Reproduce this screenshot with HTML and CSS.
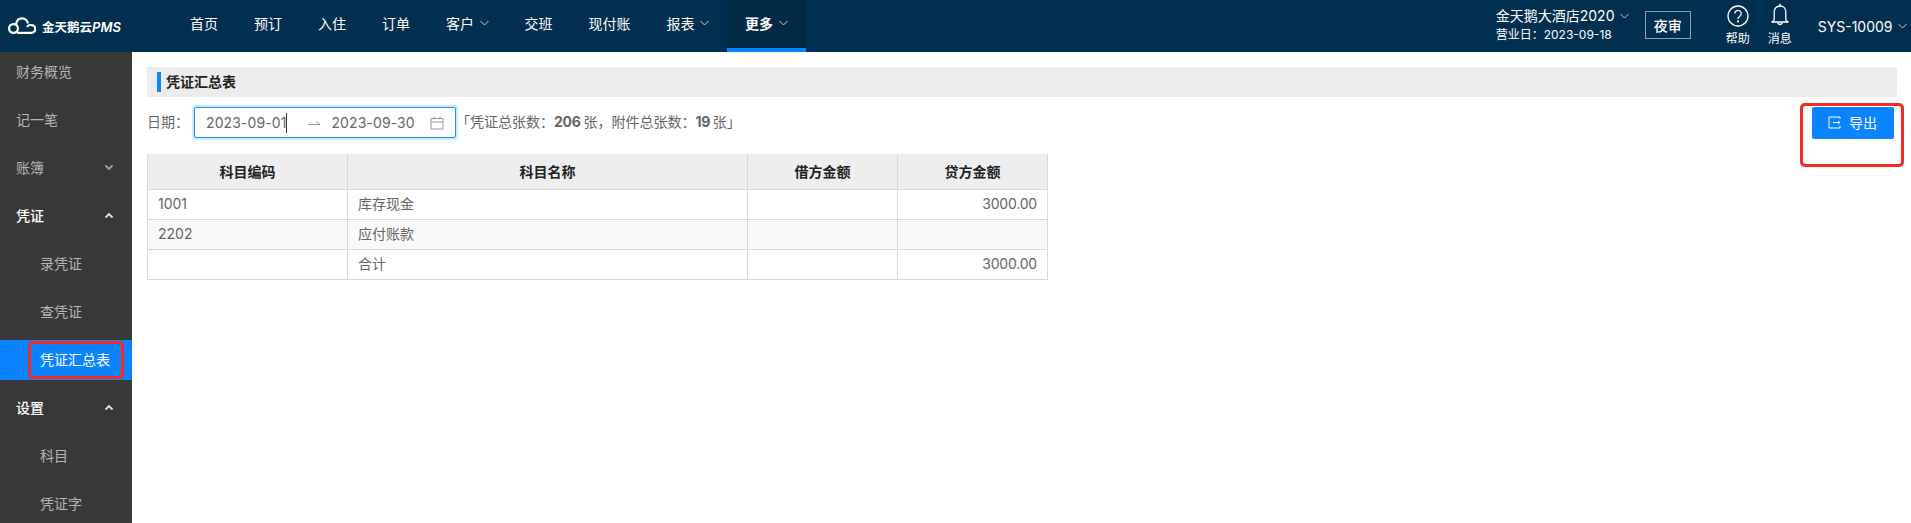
FILE: index.html
```html
<!DOCTYPE html>
<html lang="zh-CN">
<head>
    <meta charset="UTF-8">
    <meta name="viewport" content="width=device-width, initial-scale=1.0">
    <title>凭证汇总表</title>
    <link rel="stylesheet" href="styles.css">
</head>
<body>
    <header class="topbar">
        <div class="logo">
            <svg class="logo-cloud" width="28" height="18" viewBox="0 0 28 18" fill="none" stroke="#fff" stroke-width="2.2">
                <circle cx="5.5" cy="11.5" r="4.4"/>
                <path d="M8 7.5C8.5 3.5 11 1.3 14 1.3s5.5 2.2 6 5.2M9 15.8h14.5a3.3 3.3 0 0 0 0-7.6c-2-.6-3.5.2-4.5 1.6"/>
            </svg>
            <span class="logo-text">金天鹅云<em>PMS</em></span>
        </div>
        <nav class="nav">
            <a class="nav-item">首页</a>
            <a class="nav-item">预订</a>
            <a class="nav-item">入住</a>
            <a class="nav-item">订单</a>
            <a class="nav-item">客户<svg class="chev" width="9" height="6" viewBox="0 0 9 6"><path d="M.5 1l4 4 4-4"/></svg></a>
            <a class="nav-item">交班</a>
            <a class="nav-item">现付账</a>
            <a class="nav-item">报表<svg class="chev" width="9" height="6" viewBox="0 0 9 6"><path d="M.5 1l4 4 4-4"/></svg></a>
            <a class="nav-item active">更多<svg class="chev" width="9" height="6" viewBox="0 0 9 6"><path d="M.5 1l4 4 4-4"/></svg></a>
        </nav>
        <div class="top-right">
            <div class="hotel">
                <div class="hotel-name">金天鹅大酒店2020<svg class="chev" width="9" height="6" viewBox="0 0 9 6"><path d="M.5 1l4 4 4-4"/></svg></div>
                <div class="hotel-date">营业日：2023-09-18</div>
            </div>
            <button class="audit-btn">夜审</button>
            <div class="top-icon help">
                <svg width="22" height="22" viewBox="0 0 22 22" fill="none" stroke="#fff" stroke-width="1.3">
                    <circle cx="11" cy="11" r="10"/>
                    <path d="M7.8 8.6a3.2 3.2 0 1 1 5 2.6c-1.1.8-1.8 1.4-1.8 2.8"/>
                    <circle cx="11" cy="16.4" r=".5" fill="#fff"/>
                </svg>
                <span>帮助</span>
            </div>
            <div class="top-icon bell">
                <svg width="20" height="24" viewBox="0 0 20 24" fill="none" stroke="#fff" stroke-width="1.3">
                    <path d="M10 3c-3.600 0-5.800 2.600-5.800 6v7.500c0 1-.8 1.700-2.700 2.500h17c-1.900-.8-2.700-1.500-2.700-2.500V9c0-3.400-2.200-6-5.800-6z"/>
                    <path d="M10 3V.8M8 19.500a2 2 0 0 0 4 0"/>
                </svg>
                <span>消息</span>
            </div>
            <div class="user">SYS-10009<svg class="chev" width="9" height="6" viewBox="0 0 9 6"><path d="M.5 1l4 4 4-4"/></svg></div>
        </div>
    </header>

    <div class="page">
        <aside class="sidebar">
            <div class="menu-item">财务概览</div>
            <div class="menu-item">记一笔</div>
            <div class="menu-item">账簿<svg class="arrow" width="10" height="7" viewBox="0 0 10 7"><path d="M1.500 1.500l3.500 3.500 3.500-3.500"/></svg></div>
            <div class="menu-item open">凭证<svg class="arrow" width="10" height="7" viewBox="0 0 10 7"><path d="M1.500 5.500L5 2l3.500 3.500"/></svg></div>
            <div class="menu-item sub">录凭证</div>
            <div class="menu-item sub">查凭证</div>
            <div class="menu-item sub selected">凭证汇总表<span class="mark mark-menu"></span></div>
            <div class="menu-item open">设置<svg class="arrow" width="10" height="7" viewBox="0 0 10 7"><path d="M1.500 5.500L5 2l3.500 3.500"/></svg></div>
            <div class="menu-item sub">科目</div>
            <div class="menu-item sub">凭证字</div>
        </aside>

        <main class="content">
            <div class="title-bar"><h1>凭证汇总表</h1></div>
            <div class="filter-row">
                <label class="date-label">日期：</label>
                <div class="range-picker">
                    <span class="date-val">2023-09-01</span><i class="caret"></i>
                    <svg class="range-arrow" width="13" height="6" viewBox="0 0 13 6" fill="none" stroke="#999"><path d="M0 4.500h12L8.500 1.500"/></svg>
                    <span class="date-val">2023-09-30</span>
                    <svg class="calendar" width="14" height="14" viewBox="0 0 14 14" fill="none" stroke="#999"><path d="M1 2.500h12v10.500H1zM1 6h12M4 .5v3M10 .5v3"/></svg>
                </div>
                <div class="summary">「凭证总张数：<b>206</b> 张，附件总张数：<b>19</b> 张」</div>
                <button class="export-btn">
                    <svg width="13" height="13" viewBox="0 0 13 13" fill="none" stroke="#fff"><path d="M12 3V1H1v11h11v-2M5 6.500h7M10 5l2 1.500L10 8"/></svg>
                    导出
                    <span class="mark mark-export"></span>
                </button>
            </div>
            <table class="voucher-table">
                <thead>
                    <tr><th class="col-code">科目编码</th><th class="col-name">科目名称</th><th class="col-amt">借方金额</th><th class="col-amt">贷方金额</th></tr>
                </thead>
                <tbody>
                    <tr><td>1001</td><td>库存现金</td><td class="num"></td><td class="num">3000.00</td></tr>
                    <tr class="alt"><td>2202</td><td>应付账款</td><td class="num"></td><td class="num"></td></tr>
                    <tr><td></td><td>合计</td><td class="num"></td><td class="num">3000.00</td></tr>
                </tbody>
            </table>
        </main>
    </div>
</body>
</html>
```
FILE: styles.css
```css
* {
    box-sizing: border-box;
}
html, body {
    height: 100%;
}
body {
    margin: 0;
    overflow: hidden;
    background-color: #fff;
    color: #666;
    font-family: Inter, "Liberation Sans", "Noto Sans CJK SC", sans-serif;
    font-size: 14px;
}

/* top bar */
.topbar {
    display: flex;
    height: 52px;
    background-color: #012f50;
    color: #fff;
}
.logo {
    display: flex;
    align-items: center;
    width: 172px;
    padding-left: 8px;
}
.logo-cloud {
    flex: none;
}
.logo-text {
    margin-left: 6px;
    font-size: 12.5px;
    font-weight: 700;
    white-space: nowrap;
}
.logo-text em {
    font-size: 13px;
    font-weight: 600;
}
.nav {
    display: flex;
}
.nav-item {
    display: flex;
    align-items: center;
    padding: 0 18px 6px;
    white-space: nowrap;
}
.nav-item.active {
    background-color: #022a45;
    border-bottom: 4px solid #0a84ff;
    font-weight: 700;
    padding-bottom: 2px;
}
.chev {
    flex: none;
    margin-left: 5.500px;
    fill: none;
    stroke: #c3ccd4;
    stroke-width: 1;
}
.top-right {
    display: flex;
    align-items: center;
    margin-left: auto;
}
.hotel {
    width: 149px;
    padding-bottom: 3px;
}
.hotel-name {
    display: flex;
    align-items: center;
    line-height: 20px;
    white-space: nowrap;
}
.hotel-date {
    margin-top: 1px;
    font-size: 12px;
    line-height: 16px;
    white-space: nowrap;
}
.audit-btn {
    width: 46px;
    height: 28px;
    margin-bottom: 2px;
    padding: 0;
    border: 1px solid #8a9fb0;
    background: transparent;
    color: #fff;
    font: inherit;
    font-weight: 500;
}
.top-icon {
    display: flex;
    flex-direction: column;
    align-items: center;
    align-self: flex-start;
    width: 26px;
    font-size: 12px;
    line-height: 14px;
}
.top-icon svg {
    flex: none;
}
.top-icon span {
    white-space: nowrap;
}
.help {
    margin-left: 34px;
}
.help svg {
    margin: 5px 0;
}
.bell {
    margin-left: 16px;
}
.bell svg {
    margin: 3px 0 5px;
}
.user {
    display: flex;
    align-items: center;
    margin-left: 25px;
    padding-right: 4px;
    white-space: nowrap;
}

/* sidebar */
.page {
    display: flex;
    height: 471px;
}
.sidebar {
    flex: none;
    width: 132px;
    overflow: hidden;
    background-color: #383838;
    color: #b5b5b5;
}
.menu-item {
    position: relative;
    display: flex;
    align-items: center;
    justify-content: space-between;
    height: 40px;
    margin-bottom: 8px;
    padding: 0 18px 2px 16px;
    white-space: nowrap;
}
.menu-item.open {
    color: #fff;
    font-weight: 500;
}
.menu-item.sub {
    padding-left: 40px;
}
.menu-item.selected {
    background-color: #0a84ff;
    color: #fff;
}
.arrow {
    fill: none;
    stroke: currentColor;
    stroke-width: 1.8;
    opacity: .85;
}

/* red review marks over the shot */
.mark {
    position: absolute;
    border: 3px solid #f52a24;
    border-radius: 5px;
    pointer-events: none;
}
.mark-menu {
    top: 1px;
    left: 28px;
    width: 96px;
    height: 38px;
}
.mark-export {
    top: -4px;
    left: -12px;
    width: 104px;
    height: 64px;
}

/* content */
.content {
    flex: 1;
    min-width: 0;
    padding: 15px 14px 0 15px;
}
.title-bar {
    display: flex;
    align-items: center;
    height: 30px;
    padding-left: 10px;
    background-color: #ececec;
}
.title-bar h1 {
    margin: 0;
    padding-left: 5px;
    border-left: 4px solid #0a84ff;
    color: #222;
    font-size: 14px;
    font-weight: 700;
    line-height: 20px;
}
.filter-row {
    display: flex;
    align-items: flex-start;
    height: 32px;
    margin-top: 10px;
}
.date-label {
    width: 47px;
    line-height: 29px;
    white-space: nowrap;
}
.range-picker {
    display: flex;
    align-items: center;
    width: 262px;
    height: 31px;
    padding: 0 11px;
    border: 1px solid #1890ff;
    border-radius: 2px;
    box-shadow: 0 0 0 2px rgba(24, 144, 255, .2);
}
.date-val {
    letter-spacing: .1px;
    white-space: nowrap;
}
.caret {
    align-self: center;
    width: 1px;
    height: 20px;
    background-color: #333;
}
.range-arrow {
    flex: none;
    margin: 0 10px 0 21px;
}
.calendar {
    flex: none;
    margin-left: auto;
}
.summary {
    line-height: 29px;
    white-space: nowrap;
    word-spacing: -1px;
}
.summary b {
    letter-spacing: -.3px;
}
.export-btn {
    position: relative;
    display: flex;
    align-items: center;
    justify-content: center;
    gap: 8px;
    width: 82px;
    height: 32px;
    margin-left: auto;
    margin-right: 3px;
    padding: 0 1px 2px 0;
    border: none;
    border-radius: 2px;
    background-color: #0a84ff;
    color: #fff;
    font: inherit;
}

/* table */
.voucher-table {
    width: 900px;
    margin-top: 15px;
    border-collapse: collapse;
    table-layout: fixed;
}
.voucher-table th,
.voucher-table td {
    border: 1px solid #d9d9d9;
}
.voucher-table th {
    height: 35px;
    border-top: none;
    background-color: #eee;
    color: #222;
    font-weight: 700;
    text-align: center;
}
.voucher-table td {
    height: 30px;
    padding: 0 10px 2px;
}
.voucher-table .alt td {
    background-color: #f9f9f9;
}
.voucher-table .num {
    letter-spacing: -.2px;
    text-align: right;
}
.col-code {
    width: 200px;
}
.col-name {
    width: 400px;
}
.col-amt {
    width: 150px;
}
```
